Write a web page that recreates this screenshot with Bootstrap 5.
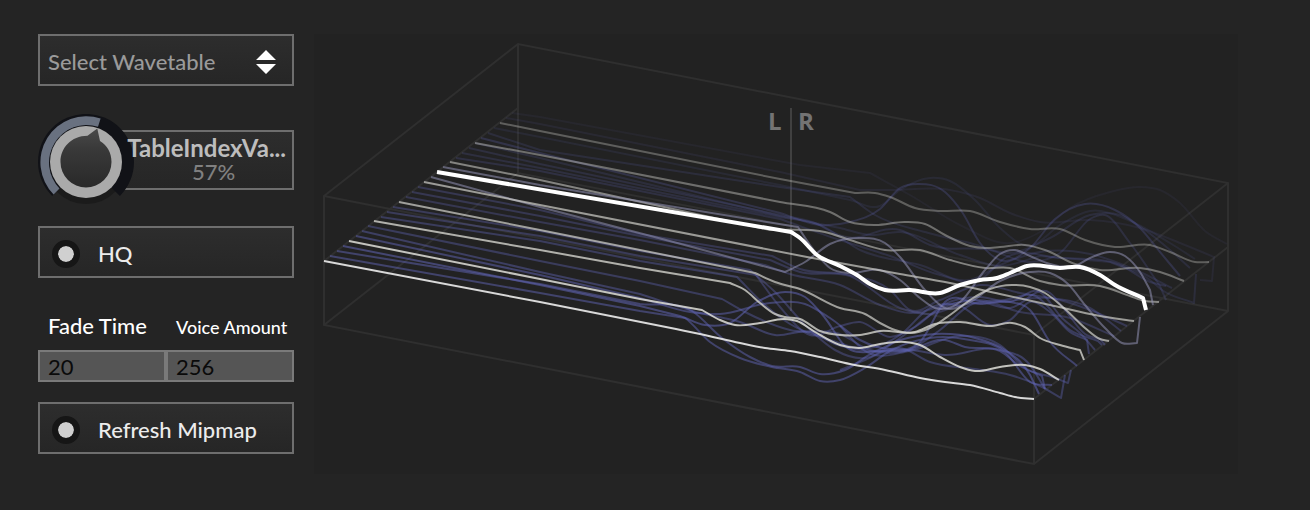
<!DOCTYPE html>
<html lang="en">
<head>
<meta charset="utf-8">
<meta name="viewport" content="width=device-width, initial-scale=1">
<title>Wavetable</title>
<link href="https://cdn.jsdelivr.net/npm/bootstrap@5.3.0/dist/css/bootstrap.min.css" rel="stylesheet">
<style>
body{background:#242424;color:#ececec;font-family:"Lato Medium",Lato,"Liberation Sans",sans-serif;font-size:22px;line-height:28px}
.shell{padding:34px 72px 34px 38px;gap:20px}
.side{width:256px}
.panel-box{border:2px solid #6e6e6e;border-radius:0;background:linear-gradient(#2d2d2d,#262626);width:100%}
.tall{height:52px;padding-top:4px}
.picker{color:#9a9a9a;font:500 22px/28px "Lato Medium",Lato,sans-serif;padding:4px 8px 0;appearance:none}
.arrows{right:18px;top:14px;pointer-events:none}
.knob-row{height:92px;margin-top:28px;padding:16px 0 0 64px}
.knob-box{height:60px}
.knob{left:0;top:0}
.knob-input{left:0;top:0;width:96px;height:96px;opacity:0;margin:0}
.knob-text{right:8px;top:22px;pointer-events:none}
.knob-name{font-family:Lato,"Liberation Sans",sans-serif;font-size:24px;font-weight:700;color:#bdbdbd;line-height:24px}
.knob-value{color:#808080;line-height:24px;padding-left:14px}
.hq{margin-top:20px}
.toggle{padding-left:12px;gap:18px;font-weight:500;cursor:pointer}
.dot{appearance:none;width:28px;height:28px;margin:0;border-radius:50%;border:6px solid #161616;background:#d0d0d0;background-clip:padding-box}
.fields{margin-top:34px;margin-bottom:20px}
.fields label{height:38px;padding-left:10px;color:#fff;font-weight:500;white-space:nowrap}
.fields .tight{font-size:18px;line-height:30px}
.num{height:32px;border:2px solid #7a7a7a;background:#555;color:#0a0a0a;padding:0 8px;width:100%;font:400 22px/28px Lato,sans-serif;border-radius:0}
.view{background:#222;min-width:0}
.view svg{width:100%;height:auto}
.cage{stroke:#2f2f2f;stroke-width:2;fill:none}
.wave{fill:none;stroke-linejoin:round}
.side-label{font:700 24px "Open Sans","Noto Sans",sans-serif;fill:#737373}
</style>
<script src="https://cdn.jsdelivr.net/npm/bootstrap@5.3.0/dist/js/bootstrap.bundle.min.js"></script>
</head>
<body>
<main class="shell d-flex align-items-start">
<form class="side flex-shrink-0">
  <div class="position-relative">
    <select class="panel-box tall picker d-block" aria-label="Wavetable"><option>Select Wavetable</option></select>
    <svg class="arrows position-absolute" width="20" height="26" viewBox="0 0 20 26" fill="#fff" aria-hidden="true"><path d="M10 2 20 12H0ZM0 16H20L10 26Z"/></svg>
  </div>
  <div class="knob-row position-relative">
    <div class="panel-box knob-box"></div>
    <svg class="knob position-absolute" width="96" height="96" viewBox="0 0 96 96" aria-hidden="true">
      <defs><linearGradient id="face" x1="0" y1="0" x2="0" y2="1"><stop offset="0" stop-color="#494949"/><stop offset=".35" stop-color="#393939"/><stop offset="1" stop-color="#292929"/></linearGradient></defs>
      <circle cx="48" cy="49" r="41" fill="#1b1b1b"/>
      <path d="M14.1 81.9A48 48 0 1 1 81.9 81.9L73.4 73.4A36 36 0 1 0 22.6 73.4Z" fill="#111217"/>
      <path d="M15.6 80.4A46 46 0 0 1 62.6 4.4L60 12.8A37.5 37.5 0 0 0 21.5 74.5Z" fill="#697180"/>
      <circle cx="48" cy="48" r="36" fill="#aaa"/>
      <path d="M59.3 14.5 49.5 21.8C33 22 22.5 34 22.5 48A25.5 25.5 0 0 0 73.5 48C73.5 38 69 31.5 62 27Z" fill="url(#face)"/>
    </svg>
    <input class="knob-input position-absolute" type="range" min="0" max="100" value="57" aria-label="TableIndexValue">
    <div class="knob-text position-absolute">
      <div class="knob-name">TableIndexVa...</div>
      <div class="knob-value text-center">57%</div>
    </div>
  </div>
  <label class="panel-box tall toggle hq d-flex align-items-center"><input class="dot" type="checkbox">HQ</label>
  <div class="fields row g-0">
    <div class="col-6 d-flex flex-column"><label for="fade">Fade Time</label><input class="num" id="fade" type="text" value="20"></div>
    <div class="col-6 d-flex flex-column"><label class="tight" for="voices">Voice Amount</label><input class="num" id="voices" type="text" value="256"></div>
  </div>
  <label class="panel-box tall toggle d-flex align-items-center"><input class="dot" type="checkbox">Refresh Mipmap</label>
</form>
<section class="view flex-grow-1" aria-label="Wavetable display">
  <svg class="d-block" viewBox="314 34 924 440">
    <path class="cage" d="M324 196 518 44 1228 183V311L1034 464 324 325ZM324 325 518 173 1228 311M518 44V173M324 196 1034 335 1228 183M1034 335V464M324 261 518 108M1034 399 1228 247"/>
    <path d="M791 108V311" stroke="#404040" stroke-width="2"/>
    <g id="waves"></g>
    <text class="side-label" x="768" y="130">L</text>
    <text class="side-label" x="798" y="130">R</text>
  </svg>
</section>
</main>
<script>
// Each wave: colour, opacity, stroke width, x y pairs from the left end to the right end.
const B = '#6064b4';
const waves = [
 [B,.08,2,'512 113 540 117 800 165 870 173 910 195 960 225 1010 243 1040 232 1070 208 1110 192 1140 187 1160 190 1180 203 1205 231 1227 244'],
 [B,.11,2,'506 118 540 124 780 172 860 190 890 190 950 190 980 198 1010 213 1040 222 1090 220 1140 228 1180 243 1214 257 1212 281 1200 280'],
 [B,.13,2,'494 128 540 137 780 185 850 200 880 206 900 190 930 178 950 181 975 200 1000 228 1030 246 1060 225 1090 211 1130 221 1170 243 1195 259'],
 [B,.18,2,'488 133 540 150 780 187 850 197 875 215 925 232 970 243 1010 253 1050 238 1090 215 1120 215 1145 230 1170 250 1190 268'],
 [B,.26,2,'481 138 540 153 780 213 820 225 850 222 880 209 900 188 918 184 945 192 962 212 980 243 1000 260 1030 248 1055 219 1085 204 1115 210 1140 228 1160 252 1180 276'],
 [B,.2,2,'469 148 540 164 780 215 812 222 845 237 900 230 930 245 990 250 1030 262 1060 253 1090 219 1105 215 1130 243 1160 286 1166 300'],
 [B,.2,2,'462 153 540 168 780 217 820 225 860 250 920 265 970 280 1000 265 1040 252 1090 254 1140 272 1172 288'],
 [B,.22,2,'456 158 540 171 780 219 840 240 890 256 940 275 980 280 1005 258 1060 258 1120 265 1150 282 1166 286'],
 [B,.18,2,'475 143 540 158 780 216 840 228 870 235 900 232 960 255 1000 266 1040 256 1110 262 1150 280 1162 290 1194 303 1196 274'],
 ['#c9c9c5',.36,2,'500 123 540 131 780 179 855 193 875 193 890 197 915 208 940 211 970 211 1000 222 1030 229 1060 229 1085 240 1115 247 1150 245 1170 252 1195 262 1209 262'],
 ['#c9c9c5',.46,2,'475 143 540 155 780 202 830 212 850 222 875 225 905 222 925 224 945 235 970 246 985 248 1000 247 1025 245 1045 250 1075 264 1100 270 1140 268 1160 272 1184 281'],
 ['#c9c9c5',.58,2,'450 162 540 180 770 230 825 232 850 240 885 250 920 250 950 260 985 268 1010 268 1040 281 1060 285 1100 286 1130 296 1145 301 1159 302'],
 [B,.32,2,'418 187 540 210 640 234 772 256 800 269 850 275 890 290 910 310 940 300 980 285 1020 293 1060 300 1095 312 1127 326'],
 [B,.32,2,'412 192 540 216 640 236 770 260 800 272 850 276 900 308 930 314 960 305 1000 302 1050 298 1090 308 1121 331'],
 [B,.32,2,'406 197 540 222 640 240 765 265 790 274 840 285 880 305 910 313 950 304 980 300 1020 312 1070 318 1114 336'],
 [B,.38,2,'393 207 540 231 640 251 750 270 775 292 805 325 835 350 865 358 900 338 935 312 970 300 1010 308 1050 293 1065 310 1085 334 1100 339 1105 345'],
 [B,.38,2,'387 212 540 236 640 256 756 275 780 307 810 335 840 326 860 322 890 337 915 327 945 304 980 297 1010 302 1040 292 1062 318 1080 333 1095 350'],
 [B,.4,2,'381 217 540 241 640 261 737 277 765 305 790 324 830 340 870 348 900 335 930 308 960 306 990 325 1010 320 1030 302 1050 312 1070 332 1087 340 1089 354'],
 [B,.4,2,'368 226 540 261 640 281 722 299 745 312 790 330 840 334 870 350 905 351 940 330 970 305 1005 300 1035 296 1070 330 1098 341 1102 345'],
 [B,.44,2,'362 231 540 272 640 294 700 313 740 322 775 335 810 332 835 344 870 351 910 350 945 355 1000 350 1030 365 1045 389'],
 [B,.5,2,'356 236 540 275 640 298 690 312 720 314 770 303 805 304 830 318 860 340 890 349 920 342 945 302 980 304 1010 302 1030 310 1050 342 1077 366'],
 [B,.55,2,'343 246 540 285 640 306 680 316 705 325 730 323 757 302 785 292 805 297 825 318 845 346 870 352 900 340 935 334 975 338 1005 350 1030 375 1039 394'],
 [B,.5,2,'337 251 540 284 640 304 692 311 722 338 750 357 772 366 800 367 820 374 845 370 875 352 905 351 945 340 965 347 1000 351 1020 366 1042 376 1045 389'],
 [B,.5,2,'330 256 540 293 640 311 685 318 710 342 740 358 772 367 800 372 820 381 840 380 865 368 890 351 930 338 970 340 1005 352 1030 382 1052 385'],
 [B,.4,2,'840 370 865 360 900 348 930 362 975 369 1010 375 1040 386 1061 398 1065 375'],
 [B,.4,2,'840 326 865 351 910 351 960 336 1000 345 1025 368 1055 378 1068 383 1071 370'],
 ['#9393b7',.54,2,'443 167 540 185 798 227 810 245 830 268 850 273 880 270 900 280 920 298 935 308 960 302 985 270 1000 254 1015 250 1030 256 1050 264 1075 266 1090 258 1110 252 1125 256 1140 272 1150 290 1153 305'],
 ['#9393b7',.54,2,'431 177 540 207 666 240 785 272 805 262 830 244 860 238 885 243 900 257 925 290 945 308 970 302 1000 281 1030 272 1050 273 1068 284 1085 305 1105 328 1122 343 1137 343 1140 317'],
 ['#d4d4ce',.68,2,'424 182 540 205 807 257 900 274 950 283 1000 294 1050 305 1100 316 1134 321'],
 ['#d4d4ce',.7,2,'399 202 540 230 640 250 755 273 775 282 800 289 840 308 865 314 880 323 895 330 910 333 930 328 950 315 970 300 990 289 1012 285 1030 287 1045 293 1065 309 1085 328 1100 339 1109 341'],
 ['#d4d4ce',.8,2,'374 221 540 250 640 268 730 283 745 290 760 303 775 314 785 317 800 319 820 331 840 335 860 335 880 331 915 332 935 324 960 322 990 326 1012 323 1025 327 1040 338 1060 345 1080 350 1084 360'],
 ['#deded9',.86,2,'349 241 540 279 640 299 702 310 720 320 735 325 760 323 785 319 797 321 815 332 840 345 860 348 880 344 905 342 920 345 940 357 960 367 975 371 1000 367 1025 365 1040 369 1059 380'],
 ['#e8e8e8',.92,2,'324 261 540 302 676 329 700 334 740 343 765 348 790 351 820 357 850 364 885 370 920 378 945 382 970 385 1000 393 1015 397 1034 399'],
 ['#fff',1,4,'437 172 791 232 800 238 817 255 840 266 857 275 870 284 885 290 910 290 940 293 960 285 980 280 997 278 1010 273 1027 266 1060 268 1080 267 1100 275 1115 285 1143 298 1146 310']
];
const layer = document.getElementById('waves');
for (const [colour, opacity, width, text] of waves) {
  const n = text.split(' ').map(Number), p = [];
  for (let i = 0; i < n.length; i += 2) p.push([n[i], n[i + 1]]);
  const straight = i => { const w = p[i][0] - p[i - 1][0]; return w > 60 || w < 8; };
  const rise = i => (p[i][1] - p[i - 1][1]) / (p[i][0] - p[i - 1][0]);
  // Slope at a knot: both neighbouring segments weigh in, except beside a straight run.
  const slope = i => {
    if (i === 0 || straight(i)) return rise(i + 1);
    if (i === p.length - 1 || straight(i + 1)) return rise(i);
    const a = p[i][0] - p[i - 1][0], b = p[i + 1][0] - p[i][0];
    return (rise(i) * b + rise(i + 1) * a) / (a + b);
  };
  let d = `M${p[0]}`;
  for (let i = 1; i < p.length; i++) {
    const a = p[i - 1], b = p[i], w = b[0] - a[0];
    if (straight(i) || p[i][0] < 690) d += `L${b}`;
    else d += `C${a[0] + w / 3},${a[1] + slope(i - 1) * w / 3} ${b[0] - w / 3},${b[1] - slope(i) * w / 3} ${b}`;
  }
  const path = document.createElementNS('http://www.w3.org/2000/svg', 'path');
  path.setAttribute('class', 'wave');
  path.setAttribute('d', d);
  path.setAttribute('stroke', colour);
  path.setAttribute('stroke-opacity', opacity);
  path.setAttribute('stroke-width', width);
  layer.append(path);
}
</script>
</body>
</html>
